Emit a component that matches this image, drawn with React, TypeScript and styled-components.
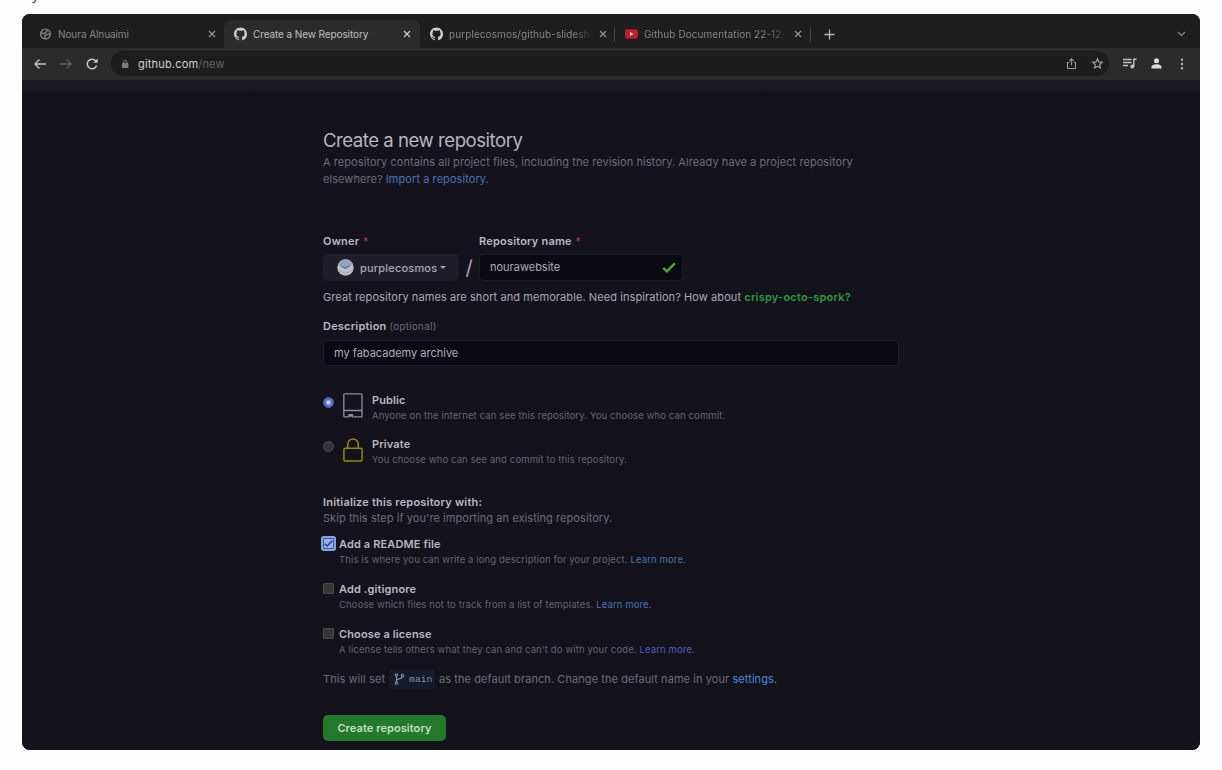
import React from "react";
import styled, { createGlobalStyle } from "styled-components";

const Global = createGlobalStyle`
  * { box-sizing: border-box; }
  body { margin: 0; background: #fefefe; font-family: Inter, "Liberation Sans", sans-serif; overflow: hidden; }
`;

const Screen = styled.div`
  width: 1222px;
  height: 770px;
  overflow: hidden;
  display: flex;
  flex-direction: column;
`;

const Caption = styled.div`
  height: 14px;
  padding-left: 31px;
  overflow: hidden;
  font-size: 16px;
  line-height: 20px;
  color: #555;
  span { display: block; margin-top: -16px; }
`;

const Window = styled.div`
  width: 1178px;
  height: 736px;
  margin-left: 22px;
  border-radius: 8px;
  overflow: hidden;
  background: #14131c;
  display: flex;
  flex-direction: column;
`;

const TabBar = styled.div`
  height: 34px;
  background: #1e1e1e;
  display: flex;
  padding-top: 6px;
`;

const Tab = styled.div<{ $w: number; $active?: boolean; $pad: number }>`
  width: ${(p) => p.$w}px;
  height: 28px;
  padding-left: ${(p) => p.$pad}px;
  display: flex;
  align-items: center;
  border-radius: 8px 8px 0 0;
  background: ${(p) => (p.$active ? "#2b2b2b" : "transparent")};
  color: ${(p) => (p.$active ? "#c0c0c0" : "#858585")};
  svg { flex: none; }
`;

const TabTitle = styled.span<{ $ls?: number; $fade?: boolean; $w: number }>`
  width: ${(p) => p.$w}px;
  flex: none;
  margin-left: 6px;
  font-size: 10px;
  letter-spacing: ${(p) => p.$ls ?? 0}px;
  white-space: nowrap;
  overflow: hidden;
  ${(p) => p.$fade && "mask-image: linear-gradient(90deg, #000 82%, transparent 97%);"}
`;

const TabDivider = styled.i`
  width: 1px;
  height: 15px;
  margin-top: 7px;
  background: #444;
`;

const TabEnd = styled.div`
  flex: 1;
  height: 28px;
  display: flex;
  align-items: center;
  justify-content: space-between;
  padding: 0 14px 0 13px;
`;

const Toolbar = styled.div`
  height: 32px;
  background: #2b2b2b;
  display: flex;
  align-items: center;
  padding: 0 11px 1px 11px;
`;

const NavIcons = styled.div`
  width: 78px;
  display: flex;
  gap: 12px;
  flex: none;
`;

const AddressBar = styled.div`
  width: 998px;
  height: 25px;
  border-radius: 12px;
  background: #1d1d1d;
  display: flex;
  align-items: center;
  padding: 0 5px 0 10px;
`;

const Url = styled.span`
  flex: 1;
  margin-left: 9px;
  font-size: 11px;
  letter-spacing: 0.18px;
  color: #d2d2d2;
  span { color: #636363; }
`;

const AddressActions = styled.div`
  display: flex;
  gap: 13px;
`;

const BrowserActions = styled.div`
  display: flex;
  align-items: center;
  gap: 13px;
  margin-left: 13px;
`;

const Page = styled.main`
  flex: 1;
  padding: 48px 0 0 301px;
  background: linear-gradient(#1b1a23 0, #1a1922 9px, #14131c 14px);
  display: flex;
  flex-direction: column;
  white-space: nowrap;
`;

const Title = styled.h1`
  margin: 0;
  height: 26px;
  font-size: 18.6px;
  line-height: 24px;
  font-weight: 400;
  letter-spacing: -0.48px;
  color: #b7b6be;
`;

const Muted = styled.p`
  margin: 0;
  line-height: 17px;
  font-size: 11px;
  letter-spacing: 0.065px;
  color: #6d6c76;
`;

const Link = styled.a<{ $c?: string }>`
  color: ${(p) => p.$c ?? "#4774b4"};
`;

const FieldRow = styled.div<{ $mt: number; $h: number }>`
  display: flex;
  align-items: center;
  height: ${(p) => p.$h}px;
  margin-top: ${(p) => p.$mt}px;
`;

const Label = styled.label<{ $w?: number }>`
  width: ${(p) => (p.$w ? p.$w + "px" : "auto")};
  font-weight: 600;
  font-size: 11px;
  letter-spacing: 0.2px;
  color: #b9b8c0;
  em { font-style: normal; font-weight: 500; color: #a03a48; margin-left: 0.5px; }
  small { font-weight: 400; font-size: 9.7px; letter-spacing: 0.35px; color: #6d6c76; }
`;

const OwnerButton = styled.button`
  width: 136px;
  height: 27px;
  border: 0;
  border-radius: 5px;
  background: #1f1e28;
  color: #a9a8b2;
  font: 500 11px Inter, sans-serif;
  letter-spacing: 0.18px;
  padding: 0 0 0 14px;
  display: flex;
  align-items: center;
  svg { margin-right: 6px; }
`;

const Caret = styled.i`
  margin-left: 3px;
  border: 3px solid transparent;
  border-top-color: #a9a8b2;
  border-bottom: 0;
`;

const Slash = styled.span`
  width: 20px;
  text-align: center;
  font-size: 20px;
  color: #a5a4ad;
`;

const Field = styled.div<{ $w: number; $h: number; $mt?: number; $ok?: boolean }>`
  width: ${(p) => p.$w}px;
  height: ${(p) => p.$h}px;
  margin-top: ${(p) => p.$mt ?? 0}px;
  border: 1px solid ${(p) => (p.$ok ? "#16201f" : "#1f1e28")};
  border-radius: 4px;
  background: #0b0a13;
  color: #aeadb6;
  font-size: 11px;
  padding: 0 6px 1px 10px;
  display: flex;
  align-items: center;
  justify-content: space-between;
`;

const Hint = styled.p`
  margin: 7px 0 0;
  line-height: 18px;
  font-size: 11px;
  letter-spacing: 0.085px;
  color: #aaa9b2;
  b { font-weight: 600; letter-spacing: 0.22px; color: #2c9a3c; }
`;

const Choice = styled.div<{ $mt: number }>`
  display: flex;
  margin-top: ${(p) => p.$mt}px;
  height: 32px;
`;

const Radio = styled.i<{ $on?: boolean }>`
  flex: none;
  width: 11px;
  height: 11px;
  margin-top: 5px;
  border-radius: 50%;
  border: 1px solid ${(p) => (p.$on ? "#4a62b4" : "#4a4a4f")};
  background: ${(p) => (p.$on ? "radial-gradient(#c3d0ff 0 1.4px, #5570c4 3px)" : "#34343a")};
`;

const ChoiceIcon = styled.div`
  width: 20px;
  height: 26px;
  margin: 1px 9.5px 0 8.5px;
  flex: none;
`;

const Copy = styled.div`
  strong { display: block; font-weight: 600; font-size: 11px; line-height: 16px; letter-spacing: 0.13px; color: #b9b8c0; }
`;

const Note = styled.div`
  font-size: 9.5px;
  line-height: 15px;
  letter-spacing: 0.125px;
  color: #64636e;
`;

const Check = styled.div<{ $mt: number }>`
  display: flex;
  height: 33px;
  margin-top: ${(p) => p.$mt}px;
`;

const Box = styled.i<{ $on?: boolean }>`
  flex: none;
  width: 11px;
  height: 11px;
  margin: 2px 5px 0 0;
  border-radius: 1px;
  border: 1px solid ${(p) => (p.$on ? "#3c5aa6" : "#4a4a4a")};
  background: ${(p) => (p.$on ? "#9ab1e6" : "#363636")};
  box-shadow: ${(p) => (p.$on ? "0 0 0 2px #88a4e0" : "none")};
  display: flex;
`;

const BranchRow = styled.div`
  display: flex;
  align-items: center;
  height: 20px;
  margin-top: 10px;
  font-size: 11px;
  letter-spacing: 0.075px;
  color: #6d6c76;
`;

const Branch = styled.code`
  width: 46px;
  height: 19px;
  margin: 0 4px 0 4px;
  border-radius: 4px;
  background: #161b2b;
  color: #8490aa;
  font: 9.6px "Liberation Mono", monospace;
  display: flex;
  align-items: center;
  gap: 4px;
  padding-left: 5px;
`;

const Submit = styled.button`
  width: 123px;
  height: 26px;
  margin-top: 26px;
  padding: 0;
  border: 0;
  border-radius: 5px;
  background: #237a2d;
  color: #c4dfc4;
  font: 600 11px Inter, sans-serif;
  letter-spacing: 0.08px;
`;

const GitHubMark = () => (
  <svg width="13" height="14" viewBox="0 0 16 16" fill="#d0d0d0">
    <path d="M8 0C3.58 0 0 3.58 0 8c0 3.54 2.29 6.53 5.47 7.59.4.07.55-.17.55-.38 0-.19-.01-.82-.01-1.49-2.01.37-2.53-.49-2.69-.94-.09-.23-.48-.94-.82-1.13-.28-.15-.68-.52-.01-.53.63-.01 1.08.58 1.23.82.72 1.21 1.87.87 2.33.66.07-.52.28-.87.51-1.07-1.78-.2-3.64-.89-3.64-3.95 0-.87.31-1.59.82-2.15-.08-.2-.36-1.02.08-2.12 0 0 .67-.21 2.2.82.64-.18 1.32-.27 2-.27s1.36.09 2 .27c1.53-1.04 2.2-.82 2.2-.82.44 1.1.16 1.92.08 2.12.51.56.82 1.27.82 2.15 0 3.07-1.87 3.75-3.65 3.95.29.25.54.73.54 1.48 0 1.07-.01 1.93-.01 2.2 0 .21.15.46.55.38A8.01 8.01 0 0 0 16 8c0-4.42-3.58-8-8-8z" />
  </svg>
);

const GlobeIcon = () => (
  <svg width="13" height="12" viewBox="0 0 12 12" fill="none" stroke="#808080" strokeWidth="1.4">
    <circle cx="6" cy="6" r="4.9" />
    <path d="M1.5 4.600l3 1.200 1.200-1.400 1.400-.4.6-2M10.600 5.400L8.400 6.600 6.600 6.400 5.400 8l.3 2.600" />
  </svg>
);

const CloseIcon = ({ c = "#949494" }: { c?: string }) => (
  <svg width="8" height="8" viewBox="0 0 8 8" stroke={c} strokeWidth="1.2">
    <path d="M1 1l6 6M7 1L1 7" />
  </svg>
);

const YouTubeIcon = () => (
  <svg width="13" height="10" viewBox="0 0 14 10">
    <rect width="14" height="10" rx="2.6" fill="#c01f2a" />
    <path d="M5.400 2.800v4.400L9.200 5z" fill="#f3d6d6" />
  </svg>
);

const Arrow = ({ flip, c }: { flip?: boolean; c: string }) => (
  <svg width="14" height="14" viewBox="0 0 14 14" fill="none" stroke={c} strokeWidth="1.400">
    <path d={flip ? "M1 7h11M7.500 2.500L12 7l-4.500 4.500" : "M13 7H2M6.500 2.500L2 7l4.500 4.500"} />
  </svg>
);

const ReloadIcon = () => (
  <svg width="14" height="14" viewBox="0 0 14 14" fill="none" stroke="#c6c6c6" strokeWidth="1.500">
    <path d="M11.600 8.600A4.800 4.800 0 1 1 10.600 3.700L12 5" />
    <path d="M12.600 1.500v4.300H8.300z" fill="#c6c6c6" stroke="none" />
  </svg>
);

const LockSmall = () => (
  <svg width="8" height="10" viewBox="0 0 8 10">
    <rect x="1" y="4" width="6.400" height="5" rx="0.800" fill="#7d7d7d" />
    <path d="M2.600 4V3a1.600 1.600 0 0 1 3.200 0v1" fill="none" stroke="#7d7d7d" />
  </svg>
);

const ShareIcon = () => (
  <svg width="13" height="13" viewBox="0 0 13 13" fill="none" stroke="#999" strokeWidth="1.100">
    <path d="M4.300 5.500H2.500v6h8v-6H8.700M6.500 8.500V2M4.200 4.100l2.300-2.300 2.300 2.300" />
  </svg>
);

const StarIcon = () => (
  <svg width="13" height="13" viewBox="0 0 13 13" fill="none" stroke="#a0a0a0" strokeWidth="1.200">
    <path d="M6.500 1.800l1.400 3.100 3.300.4-2.500 2.200.7 3.400-2.900-1.700-2.900 1.700.7-3.400-2.500-2.200 3.300-.4z" />
  </svg>
);

const QueueIcon = () => (
  <svg width="15" height="13" viewBox="0 0 15 13" fill="none" stroke="#c0c0c0" strokeWidth="1.400">
    <path d="M1 2.500h8.500M1 5.500h8.500M1 8.500h5M11.800 9.500V2.300h2.700" />
    <circle cx="10.300" cy="9.500" r="1.300" fill="#c0c0c0" />
  </svg>
);

const PersonIcon = () => (
  <svg width="13" height="13" viewBox="0 0 13 13" fill="#dcdcdc">
    <circle cx="6.500" cy="3.700" r="2.500" />
    <path d="M1.500 11.500V9.800C1.500 8 4.500 7.200 6.500 7.200s5 .8 5 2.600v1.700z" />
  </svg>
);

const DotsIcon = () => (
  <svg width="12" height="12" viewBox="0 0 12 12" fill="#b0b0b0">
    <circle cx="6" cy="1.800" r="1.200" />
    <circle cx="6" cy="6" r="1.200" />
    <circle cx="6" cy="10.200" r="1.200" />
  </svg>
);

const Avatar = () => (
  <svg width="17" height="17" viewBox="0 0 17 17">
    <circle cx="8.500" cy="8.500" r="8.200" fill="#b9c2c9" />
    <path d="M1 6.500C2.500 2 6 .5 9 .5s6 2 7 5L9 8.500z" fill="#98a4bd" />
    <path d="M4 7l4.500 2.200L13 6.500" stroke="#5f6d8c" strokeWidth="1.300" fill="none" />
    <path d="M3 12c3 2.500 8 2.500 11 0" stroke="#a9b29a" strokeWidth="1.600" fill="none" />
  </svg>
);

const RepoIcon = () => (
  <svg width="20" height="26" viewBox="0 0 20 26" fill="none" stroke="#8e8d97" strokeWidth="1.300">
    <path d="M5 23.800H1.700A1 1 0 0 1 .8 22.800V2A1.200 1.200 0 0 1 2 .8h16a1 1 0 0 1 1 1v22h-8.500M1 17.500h18" />
    <path d="M5.300 21h5v4l-2.500-1.400L5.300 25z" fill="#8e8d97" stroke="none" />
  </svg>
);

const PrivateIcon = () => (
  <svg width="20" height="26" viewBox="0 0 20 26" fill="none" stroke="#8f8a0e" strokeWidth="1.500">
    <rect x="0.900" y="11.300" width="18.200" height="12.600" rx="1.400" />
    <path d="M4.700 11.300V7.300a5.300 5.300 0 0 1 10.600 0v4" />
  </svg>
);

const Tick = ({ w, h, c, s }: { w: number; h: number; c: string; s: number }) => (
  <svg width={w} height={h} viewBox="0 0 12 9" fill="none" stroke={c} strokeWidth={s}>
    <path d="M1 4.800l3.200 3L11 1" />
  </svg>
);

const BranchIcon = () => (
  <svg width="11" height="12" viewBox="0 0 11 12" fill="none" stroke="#8490aa" strokeWidth="1.100">
    <circle cx="2.500" cy="2" r="1.200" />
    <circle cx="2.500" cy="10" r="1.200" />
    <circle cx="8.500" cy="2.500" r="1.200" />
    <path d="M2.500 3.200v5.600M8.500 3.700c0 2.500-5.500 1.300-6 3.800" />
  </svg>
);

export default function App() {
  return (
    <Screen>
      <Global />
      <Caption><span>y</span></Caption>
      <Window>
        <TabBar>
          <Tab $w={202} $pad={17}>
            <GlobeIcon />
            <TabTitle $w={150} $ls={-0.08}>Noura Alnuaimi</TabTitle>
            <CloseIcon />
          </Tab>
          <Tab $w={196} $pad={10} $active>
            <GitHubMark />
            <TabTitle $w={150} $ls={-0.1}>Create a New Repository</TabTitle>
            <CloseIcon c="#d0d0d0" />
          </Tab>
          <Tab $w={194} $pad={10}>
            <GitHubMark />
            <TabTitle $w={150} $ls={0.08} $fade>purplecosmos/github-slidesho</TabTitle>
            <CloseIcon />
          </Tab>
          <TabDivider />
          <Tab $w={195} $pad={10}>
            <YouTubeIcon />
            <TabTitle $w={150} $ls={0.07} $fade>Github Documentation 22-12-</TabTitle>
            <CloseIcon />
          </Tab>
          <TabDivider />
          <TabEnd>
            <svg width="11" height="11" viewBox="0 0 11 11" stroke="#b4b4b4" strokeWidth="1.300"><path d="M5.500 .5v10M.5 5.500h10" /></svg>
            <svg width="9" height="6" viewBox="0 0 9 6" fill="none" stroke="#808080" strokeWidth="1.400"><path d="M1 1l3.500 3.500L8 1" /></svg>
          </TabEnd>
        </TabBar>
        <Toolbar>
          <NavIcons>
            <Arrow c="#c6c6c6" />
            <Arrow flip c="#5c5c5c" />
            <ReloadIcon />
          </NavIcons>
          <AddressBar>
            <LockSmall />
            <Url>github.com<span>/new</span></Url>
            <AddressActions><ShareIcon /><StarIcon /></AddressActions>
          </AddressBar>
          <BrowserActions><QueueIcon /><PersonIcon /><DotsIcon /></BrowserActions>
        </Toolbar>
        <Page>
          <Title>Create a new repository</Title>
          <Muted>
            A repository contains all project files, including the revision history. Already have a project repository
            <br />
            elsewhere? <Link>Import a repository.</Link>
          </Muted>
          <FieldRow $mt={44} $h={18}>
            <Label $w={156}>Owner <em>*</em></Label>
            <Label>Repository name <em>*</em></Label>
          </FieldRow>
          <FieldRow $mt={4} $h={27}>
            <OwnerButton><Avatar />purplecosmos<Caret /></OwnerButton>
            <Slash>/</Slash>
            <Field $w={204} $h={27} $ok>nourawebsite<Tick w={14} h={11} c="#4aab30" s={2} /></Field>
          </FieldRow>
          <Hint>Great repository names are short and memorable. Need inspiration? How about <b>crispy-octo-spork?</b></Hint>
          <FieldRow $mt={11} $h={17}>
            <Label>Description <small>(optional)</small></Label>
          </FieldRow>
          <Field $w={576} $h={26} $mt={6}>my fabacademy archive</Field>
          <Choice $mt={26}>
            <Radio $on />
            <ChoiceIcon><RepoIcon /></ChoiceIcon>
            <Copy>
              <strong>Public</strong>
              <Note>Anyone on the internet can see this repository. You choose who can commit.</Note>
            </Copy>
          </Choice>
          <Choice $mt={12}>
            <Radio />
            <ChoiceIcon><PrivateIcon /></ChoiceIcon>
            <Copy>
              <strong>Private</strong>
              <Note>You choose who can see and commit to this repository.</Note>
            </Copy>
          </Choice>
          <FieldRow $mt={25} $h={17}>
            <Label>Initialize this repository with:</Label>
          </FieldRow>
          <Muted>Skip this step if you're importing an existing repository.</Muted>
          <Check $mt={9}>
            <Box $on><Tick w={9} h={9} c="#27418a" s={2} /></Box>
            <Copy>
              <strong>Add a README file</strong>
              <Note>This is where you can write a long description for your project. <Link>Learn more.</Link></Note>
            </Copy>
          </Check>
          <Check $mt={12}>
            <Box />
            <Copy>
              <strong>Add .gitignore</strong>
              <Note>Choose which files not to track from a list of templates. <Link>Learn more.</Link></Note>
            </Copy>
          </Check>
          <Check $mt={12}>
            <Box />
            <Copy>
              <strong>Choose a license</strong>
              <Note>A license tells others what they can and can't do with your code. <Link $c="#4d5fc0">Learn more.</Link></Note>
            </Copy>
          </Check>
          <BranchRow>
            This will set <Branch><BranchIcon />main</Branch> <span>as the default branch. Change the default name in your <Link $c="#4c83d6">settings.</Link></span>
          </BranchRow>
          <Submit>Create repository</Submit>
        </Page>
      </Window>
    </Screen>
  );
}
